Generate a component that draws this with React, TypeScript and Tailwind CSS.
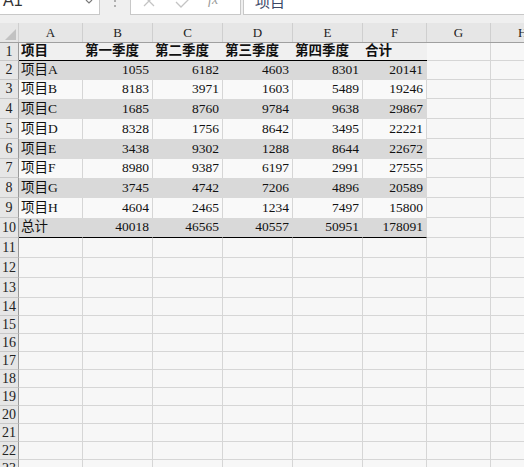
import React from 'react';

const FONT = { fontFamily: '"Liberation Serif", "Noto Sans CJK SC", serif' };

const COLS = [64, 70, 70, 70, 70, 64];
const COL_CLS = ['w-[64px]', 'w-[70px]', 'w-[70px]', 'w-[70px]', 'w-[70px]', 'w-[64px]'];

const header = ['项目', '第一季度', '第二季度', '第三季度', '第四季度', '合计'];

const data: (string | number)[][] = [
  ['项目A', 1055, 6182, 4603, 8301, 20141],
  ['项目B', 8183, 3971, 1603, 5489, 19246],
  ['项目C', 1685, 8760, 9784, 9638, 29867],
  ['项目D', 8328, 1756, 8642, 3495, 22221],
  ['项目E', 3438, 9302, 1288, 8644, 22672],
  ['项目F', 8980, 9387, 6197, 2991, 27555],
  ['项目G', 3745, 4742, 7206, 4896, 20589],
  ['项目H', 4604, 2465, 1234, 7497, 15800],
  ['总计', 40018, 46565, 40557, 50951, 178091],
];

// heights of rows 2..10 and 11..23
const dataHeights = ['h-[19px]', 'h-[19px]', 'h-[20px]', 'h-[20px]', 'h-[20px]', 'h-[19px]', 'h-[20px]', 'h-[20px]', 'h-[20px]'];
const emptyHeights = ['h-[20px]', 'h-[20px]', 'h-[20px]', 'h-[18px]', 'h-[18px]', 'h-[18px]', 'h-[18px]', 'h-[18px]', 'h-[18px]', 'h-[18px]', 'h-[18px]', 'h-[18px]', 'h-[18px]'];

function RowHead({ n }: { n: number }) {
  return (
    <div className="w-[19px] shrink-0 h-full bg-[#e6e6e6] border-r border-r-[#9a9a9a] border-b border-b-[#c8c8c8] flex items-center justify-center text-[14px] text-[#222] leading-none overflow-visible whitespace-nowrap">
      {n}
    </div>
  );
}

function EmptyTail() {
  return (
    <>
      <div className="w-[64px] shrink-0 h-full border-r border-b border-[#d6d6d6]" />
      <div className="flex-1 h-full border-b border-[#d6d6d6]" />
    </>
  );
}

function TopBar() {
  return (
    <div className="h-[23px] bg-[#efefef] relative">
      <div className="flex h-[15px]">
        <div className="w-[100px] h-[15px] bg-white border-r border-b border-[#c8c8c8] overflow-hidden relative">
          <div
            className="mt-[-7px] pl-[3px] text-[16px] leading-[16px] text-[#333]"
            style={{ fontFamily: '"Liberation Sans", sans-serif' }}
          >
            A1
          </div>
          <svg className="absolute left-[85px] top-0" width="8" height="5" viewBox="0 0 8 5">
            <path d="M1 0 L4 3 L7 0" fill="none" stroke="#7a7a7a" strokeWidth="1.2" />
          </svg>
        </div>
        <div className="w-[30px] h-[15px] relative">
          <svg className="absolute left-[13px] top-0" width="4" height="10" viewBox="0 0 4 10">
            <circle cx="2" cy="1" r="1" fill="#9a9a9a" />
            <circle cx="2" cy="6" r="1" fill="#9a9a9a" />
          </svg>
        </div>
        <div className="w-[111px] h-[15px] bg-white border-l border-r border-b border-[#c8c8c8] relative overflow-hidden">
          <svg className="absolute left-[12px] top-0" width="14" height="8" viewBox="0 0 14 8">
            <path d="M1 -4 L11 6 M11 -4 L1 6" fill="none" stroke="#c4c4c4" strokeWidth="1.3" />
          </svg>
          <svg className="absolute left-[44px] top-0" width="18" height="9" viewBox="0 0 18 9">
            <path d="M1 2 L6 7 L16 -3" fill="none" stroke="#c4c4c4" strokeWidth="1.3" />
          </svg>
          <div
            className="absolute left-[77px] top-[-8px] text-[14px] leading-[16px] italic text-[#9a9a9a]"
            style={{ fontFamily: '"Liberation Serif", serif' }}
          >
            fx
          </div>
        </div>
        <div className="w-[2px]" />
        <div className="flex-1 h-[15px] bg-white border-l border-b border-[#c8c8c8] overflow-hidden">
          <div
            className="mt-[-8px] pl-[11px] text-[15px] leading-[17px] text-[#3a4666]"
            style={{ fontFamily: '"Noto Sans CJK SC", sans-serif' }}
          >
            项目
          </div>
        </div>
      </div>
    </div>
  );
}

function ColumnHeader() {
  const letters = ['A', 'B', 'C', 'D', 'E', 'F', 'G'];
  return (
    <div className="flex h-[20px] bg-[#e6e6e6] border-b border-[#a0a0a0] text-[13px] text-[#222]">
      <div className="w-[19px] shrink-0 h-full border-r border-[#cfcfcf] relative">
        <svg className="absolute right-[2px] bottom-[2px]" width="11" height="11" viewBox="0 0 11 11">
          <polygon points="11,0 11,11 0,11" fill="#c2c2c2" />
        </svg>
      </div>
      {letters.map((l, i) => (
        <div
          key={l}
          className={`${i < 6 ? COL_CLS[i] : 'w-[64px]'} shrink-0 h-full border-r border-[#cfcfcf] flex items-center justify-center`}
        >
          {l}
        </div>
      ))}
      <div className="flex-1 h-full flex items-center pl-[27px] whitespace-nowrap">H</div>
    </div>
  );
}

export default function App() {
  return (
    <div className="w-[524px] h-[467px] overflow-hidden bg-[#f7f7f7] text-[#111]" style={FONT}>
      <TopBar />
      <ColumnHeader />

      {/* Row 1: headings */}
      <div className="flex h-[18px]">
        <RowHead n={1} />
        {header.map((h, i) => (
          <div
            key={h}
            className={`${COL_CLS[i]} shrink-0 h-full bg-[#f0f0f0] border-b border-black flex items-center pl-[2px] text-[13.5px] font-bold whitespace-nowrap`}
          >
            {h}
          </div>
        ))}
        <EmptyTail />
      </div>

      {data.map((row, r) => {
        const gray = r % 2 === 0;
        const last = r === data.length - 1;
        return (
          <div key={r} className={`flex ${dataHeights[r]}`}>
            <RowHead n={r + 2} />
            {row.map((v, i) => (
              <div
                key={i}
                className={`${COL_CLS[i]} shrink-0 h-full flex items-center text-[13.5px] whitespace-nowrap border-r ${
                  gray ? 'bg-[#d9d9d9] border-r-[#d9d9d9]' : 'bg-[#f9f9f9] border-r-[#d6d6d6]'
                } ${last ? 'border-b border-b-black' : ''} ${
                  i === 0 ? 'pl-[2px]' : 'justify-end pr-[3px]'
                }`}
              >
                {v}
              </div>
            ))}
            <EmptyTail />
          </div>
        );
      })}

      {emptyHeights.map((h, i) => (
        <div key={i} className={`flex ${h}`}>
          <RowHead n={i + 11} />
          {COLS.map((_, c) => (
            <div key={c} className={`${COL_CLS[c]} shrink-0 h-full border-r border-b border-[#d6d6d6]`} />
          ))}
          <EmptyTail />
        </div>
      ))}
    </div>
  );
}
